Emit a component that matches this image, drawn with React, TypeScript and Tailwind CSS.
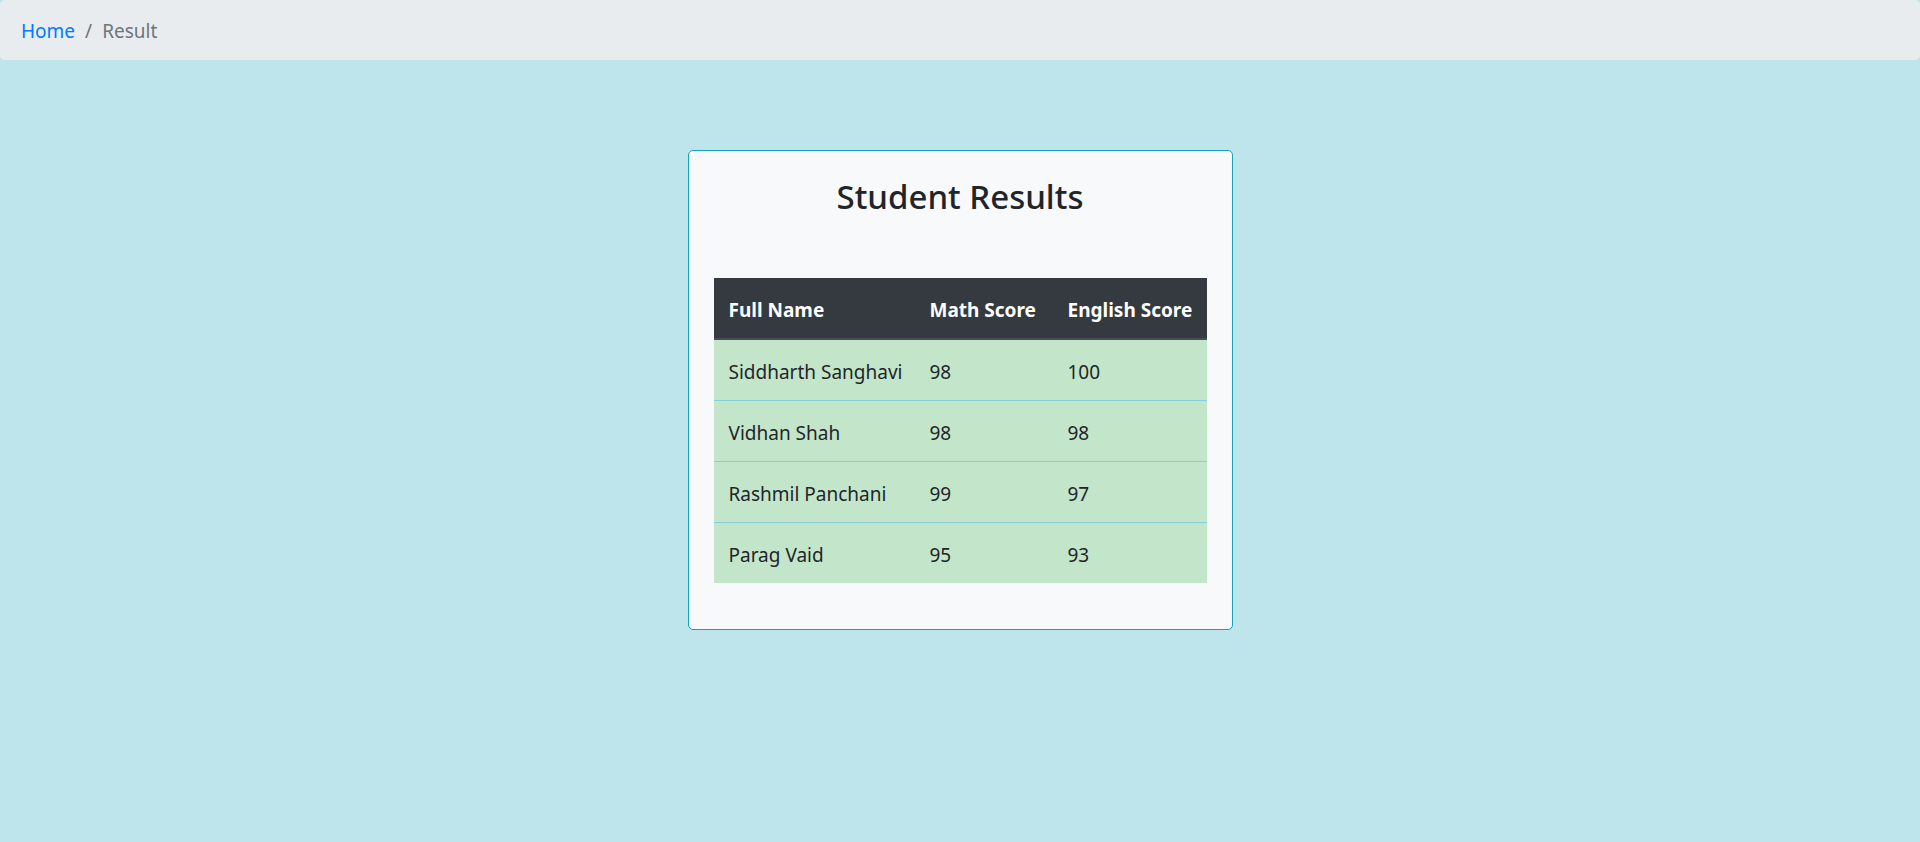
import React from "react";

const rows = [
  { name: "Siddharth Sanghavi", math: "98", english: "100" },
  { name: "Vidhan Shah", math: "98", english: "98" },
  { name: "Rashmil Panchani", math: "99", english: "97" },
  { name: "Parag Vaid", math: "95", english: "93" },
];

export default function App() {
  return (
    <div
      className="min-h-[842px] w-full bg-[#bee5eb] text-[#212529]"
      style={{ fontFamily: '"Noto Sans", "Open Sans", sans-serif' }}
    >
      <nav className="flex h-[60px] items-center rounded-[5px] bg-[#e9ecef] px-[21px] pt-[2px] text-[19px] leading-[30px]">
        <span className="text-[#007bff]">Home</span>
        <span className="px-[10px] text-[#6c757d]">/</span>
        <span className="text-[#6c757d]">Result</span>
      </nav>

      <div className="mt-[90px] flex justify-center">
        <div className="w-[545px] rounded-[5px] border border-[#17a2b8] bg-[#f8f9fa] px-[25px] pb-[46px] pt-[22px]">
          <h2 className="text-center text-[33px] font-medium leading-[48px]">
            Student Results
          </h2>
          <table className="mt-[57px] w-[493px] table-fixed border-collapse text-left text-[19px] leading-[30px]">
            <colgroup>
              <col className="w-[201px]" />
              <col className="w-[138px]" />
              <col className="w-[154px]" />
            </colgroup>
            <thead>
              <tr className="bg-[#343a40] text-white">
                <th className="whitespace-nowrap border-b-2 border-[#454d55] px-[15px] pb-[13px] pt-[17px] font-bold">Full Name</th>
                <th className="whitespace-nowrap border-b-2 border-[#454d55] px-[15px] pb-[13px] pt-[17px] font-bold">Math Score</th>
                <th className="whitespace-nowrap border-b-2 border-[#454d55] px-[15px] pb-[13px] pt-[17px] font-bold">English Score</th>
              </tr>
            </thead>
            <tbody>
              {rows.map((r, i) => (
                <tr
                  key={r.name}
                  className={
                    i === 0
                      ? "border-t border-[#c3e6cb] bg-[#c3e6cb]"
                      : "border-t border-[#86cfda] bg-[#c3e6cb]"
                  }
                >
                  <td className="whitespace-nowrap px-[15px] pb-[13px] pt-[17px]">{r.name}</td>
                  <td className="px-[15px] pb-[13px] pt-[17px]">{r.math}</td>
                  <td className="px-[15px] pb-[13px] pt-[17px]">{r.english}</td>
                </tr>
              ))}
            </tbody>
          </table>
        </div>
      </div>
    </div>
  );
}
